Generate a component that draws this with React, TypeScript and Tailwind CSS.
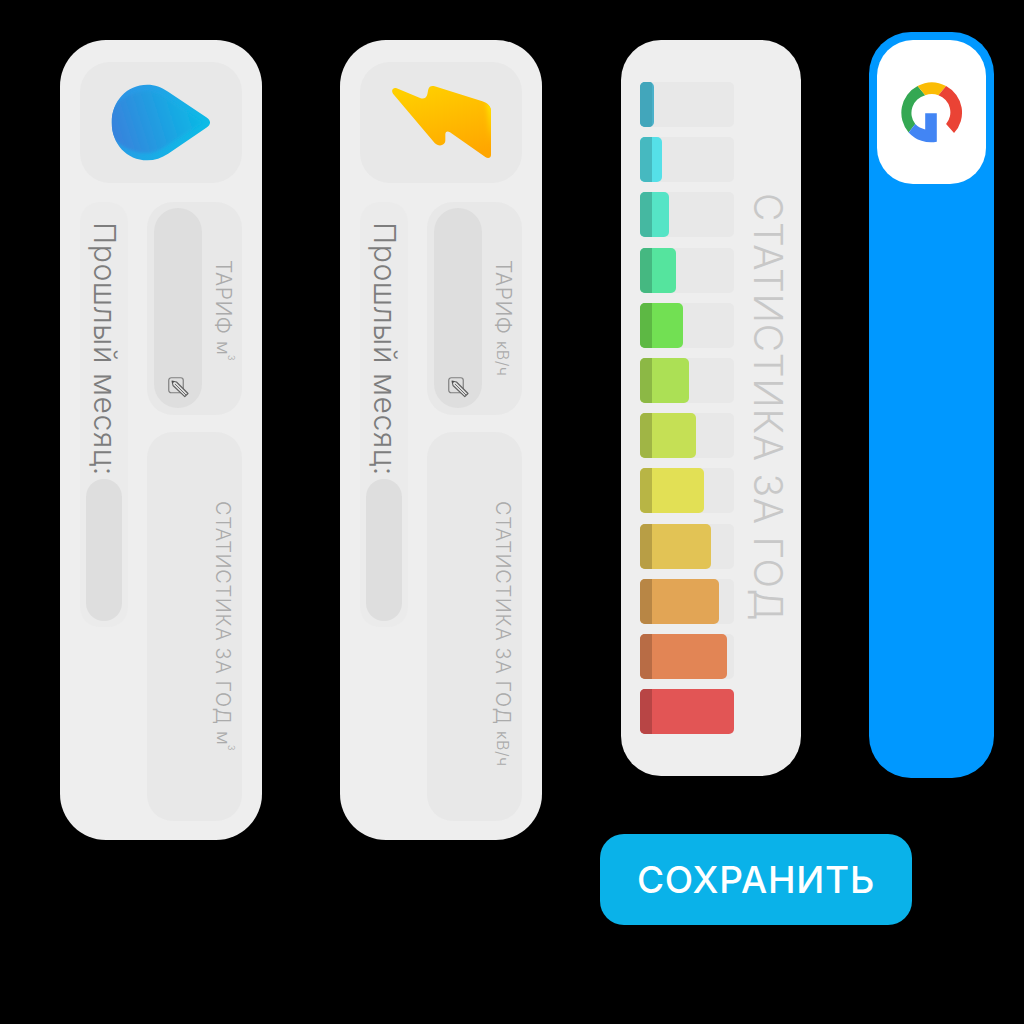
import React from "react";

const V = "[writing-mode:vertical-rl]";

function Drop() {
  const d =
    "M262 132 C285 132 305 140 325 153 L440 230 C455 240 455 252 440 262 L325 340 C305 353 285 360 262 360 C200 360 155 310 155 246 C155 182 200 132 262 132 Z";
  return (
    <svg width="100" height="77" viewBox="153 130 301 232">
      <defs>
        <linearGradient id="dropA" x1="0" y1="0.2" x2="1" y2="0.5">
          <stop offset="0" stopColor="#2f93e6" />
          <stop offset="1" stopColor="#0cbce6" />
        </linearGradient>
        <linearGradient id="dropB" x1="0" y1="0.65" x2="1" y2="0.45">
          <stop offset="0" stopColor="#3a7fdc" />
          <stop offset="1" stopColor="#0bb8e5" />
        </linearGradient>
        <filter id="dropBlur" x="-10%" y="-10%" width="120%" height="120%">
          <feGaussianBlur stdDeviation="5" />
        </filter>
        <clipPath id="dropClip">
          <path d={d} />
        </clipPath>
      </defs>
      <path d={d} fill="url(#dropA)" />
      <g clipPath="url(#dropClip)">
        <path
          d="M258 152 C280 152 300 160 320 174 L430 246 L320 315 C300 330 280 338 258 338 C205 338 140 295 140 246 C140 197 205 152 258 152 Z"
          fill="url(#dropB)"
          filter="url(#dropBlur)"
        />
      </g>
    </svg>
  );
}

function Bolt() {
  const d =
    "M168 144 L240 174 C250 177 258 172 260 162 L263 147 C265 138 273 135 282 138 L425 183 C440 188 451 198 451 212 L451 344 C451 353 442 356 434 350 L328 276 C320 271 314 274 314 282 L314 300 C314 316 294 321 282 308 L157 160 C150 150 158 140 168 144 Z";
  return (
    <svg width="101" height="75" viewBox="152 134 301 225">
      <defs>
        <linearGradient id="boltA" x1="0.3" y1="0" x2="0.7" y2="1">
          <stop offset="0" stopColor="#ffcf00" />
          <stop offset="1" stopColor="#ffa600" />
        </linearGradient>
        <linearGradient id="boltB" x1="0" y1="0" x2="0" y2="1">
          <stop offset="0" stopColor="#ffe600" />
          <stop offset="0.55" stopColor="#ffc400" />
          <stop offset="1" stopColor="#ffa600" stopOpacity="0" />
        </linearGradient>
        <filter id="boltBlur" x="-200%" y="-20%" width="500%" height="140%">
          <feGaussianBlur stdDeviation="7" />
        </filter>
        <clipPath id="boltClip">
          <path d={d} />
        </clipPath>
      </defs>
      <path d={d} fill="url(#boltA)" />
      <g clipPath="url(#boltClip)">
        <path d="M438 185 L470 185 L470 330 L445 330 Z" fill="url(#boltB)" filter="url(#boltBlur)" />
      </g>
    </svg>
  );
}

function EditIcon() {
  return (
    <svg width="21" height="21" viewBox="0 0 21 21" fill="none">
      <rect x="0.75" y="0.75" width="14.5" height="15" rx="2.5" stroke="#808080" strokeWidth="1.2" />
      <path d="M4 4 L8.5 5 L20 16.5 L16.8 19.7 L5 8.5 Z" fill="#dedede" stroke="#5f5f5f" strokeWidth="1.1" strokeLinejoin="round" />
      <path d="M7 7 L18 18" stroke="#5f5f5f" strokeWidth="0.9" />
      <path d="M4 4 L6.5 4.6 L4.6 6.5 Z" fill="#444444" />
    </svg>
  );
}

function GoogleIcon() {
  return (
    <svg width="63" height="61" viewBox="120 168 188 184">
      <path d="M172 180 A91 91 0 0 0 145 320 L165 295 A55 55 0 0 1 195 208 Z" fill="#34a853" />
      <path d="M172 180 A91 91 0 0 1 258 180 L235 208 A55 55 0 0 0 195 208 Z" fill="#fbbc05" />
      <path d="M258 180 A91 91 0 0 1 282 322 L258 295 A55 55 0 0 0 235 208 Z" fill="#ea4335" />
      <path d="M145 320 A91 91 0 0 0 230 348 L230 262 L195 262 L195 311 A55 55 0 0 1 165 295 Z" fill="#4285f4" />
    </svg>
  );
}

function Cubed() {
  return (
    <>
      <span className="text-[18px]">м</span>
      <span className="text-[9px] relative left-[8px] align-baseline">3</span>
    </>
  );
}

function MeterCard({ icon, unit }: { icon: React.ReactNode; unit: React.ReactNode }) {
  return (
    <div className="w-[202px] h-[800px] mt-[40px] shrink-0 rounded-[46px] bg-[#eeeeee] pt-[22px] px-[20px] flex flex-col">
      <div className="h-[121px] rounded-[30px] bg-[#e8e8e8] flex items-center justify-center">{icon}</div>
      <div className="mt-[19px] flex gap-[19px]">
        <div className="w-[48px] h-[425px] rounded-[20px] bg-[#ebebeb] flex flex-col items-center pt-[20px]">
          <div className={`${V} text-[30px] tracking-[0.6px] leading-[30px] font-light text-[#7d7d7d] h-[253px] whitespace-nowrap pl-[2px]`}>
            Прошлый месяц:
          </div>
          <div className="mt-[4px] w-[36px] h-[142px] rounded-[18px] bg-[#dedede]" />
        </div>
        <div className="w-[95px] flex flex-col gap-[17px]">
          <div className="h-[213px] rounded-[26px] bg-[#e8e8e8] pl-[7px] pt-[6px] flex">
            <div className="w-[48px] h-[200px] rounded-[24px] bg-[#dedede] flex flex-col items-center justify-end pb-[10px] pl-[1px]">
              <EditIcon />
            </div>
            <div className={`${V} ml-[11px] mt-[52px] text-[21px] tracking-[0.5px] leading-[20px] font-light text-[#ababab] whitespace-nowrap`}>
              ТАРИФ {unit}
            </div>
          </div>
          <div className="h-[389px] rounded-[26px] bg-[#e8e8e8] pt-[69px] pl-[66px]">
            <div className={`${V} text-[20px] tracking-[0.6px] leading-[20px] font-light text-[#ababab] whitespace-nowrap`}>
              СТАТИСТИКА ЗА ГОД {unit}
            </div>
          </div>
        </div>
      </div>
    </div>
  );
}

const bars = [
  { w: 14, light: "#4bb1ca", dark: "#42a6bb" },
  { w: 22, light: "#55e0e8", dark: "#46b9c0" },
  { w: 29, light: "#55e4c6", dark: "#45b8a1" },
  { w: 36, light: "#55e49e", dark: "#45b881" },
  { w: 43, light: "#72e053", dark: "#5db844" },
  { w: 49, light: "#ace055", dark: "#8cb845" },
  { w: 56, light: "#c5e055", dark: "#a0b545" },
  { w: 64, light: "#e2e055", dark: "#b8b545" },
  { w: 71, light: "#e2c355", dark: "#b89e45" },
  { w: 79, light: "#e2a555", dark: "#b88645" },
  { w: 87, light: "#e28555", dark: "#b86c45" },
  { w: 94, light: "#e25555", dark: "#b84545" },
];

function ChartCard() {
  return (
    <div className="ml-[21px] w-[180px] h-[736px] rounded-[40px] bg-[#eeeeee] flex pl-[19px] pt-[42px]">
      <div className="w-[94px] flex flex-col gap-[10.2px]">
        {bars.map((b) => (
          <div key={b.w} className="h-[45px] rounded-[5px] bg-[#e8e8e8]">
            <div
              className="h-full rounded-[5px] overflow-hidden flex"
              style={{ width: b.w, backgroundColor: b.light }}
            >
              <div className="w-[12px] shrink-0 h-full" style={{ backgroundColor: b.dark }} />
            </div>
          </div>
        ))}
      </div>
      <div className={`${V} ml-[14px] mt-[111px] text-[39px] tracking-[0.7px] leading-[40px] font-light text-[#c8c8c8] whitespace-nowrap`}>
        СТАТИСТИКА ЗА ГОД
      </div>
    </div>
  );
}

export default function App() {
  return (
    <div className="w-[1024px] h-[1024px] bg-black overflow-hidden flex items-start pl-[60px] [font-family:Inter,sans-serif]">
      <MeterCard icon={<Drop />} unit={<Cubed />} />
      <div className="w-[78px] shrink-0" />
      <MeterCard icon={<Bolt />} unit={<span className="text-[16px]">кВ/ч</span>} />
      <div className="ml-[58px] w-[248px] shrink-0 mt-[40px] flex flex-col">
        <ChartCard />
        <button className="mt-[58px] w-[312px] h-[91px] shrink-0 rounded-[24px] bg-[#0ab2e9] text-white text-[37px] tracking-[0.8px] font-medium flex items-center justify-center [font-family:Inter,sans-serif]">
          СОХРАНИТЬ
        </button>
      </div>
      <div className="ml-[21px] mt-[32px] w-[125px] h-[746px] shrink-0 rounded-[42px] bg-[#0098ff] pt-[8px] px-[8px]">
        <div className="w-[109px] h-[144px] rounded-[36px] bg-white flex items-center justify-center">
          <GoogleIcon />
        </div>
      </div>
    </div>
  );
}
